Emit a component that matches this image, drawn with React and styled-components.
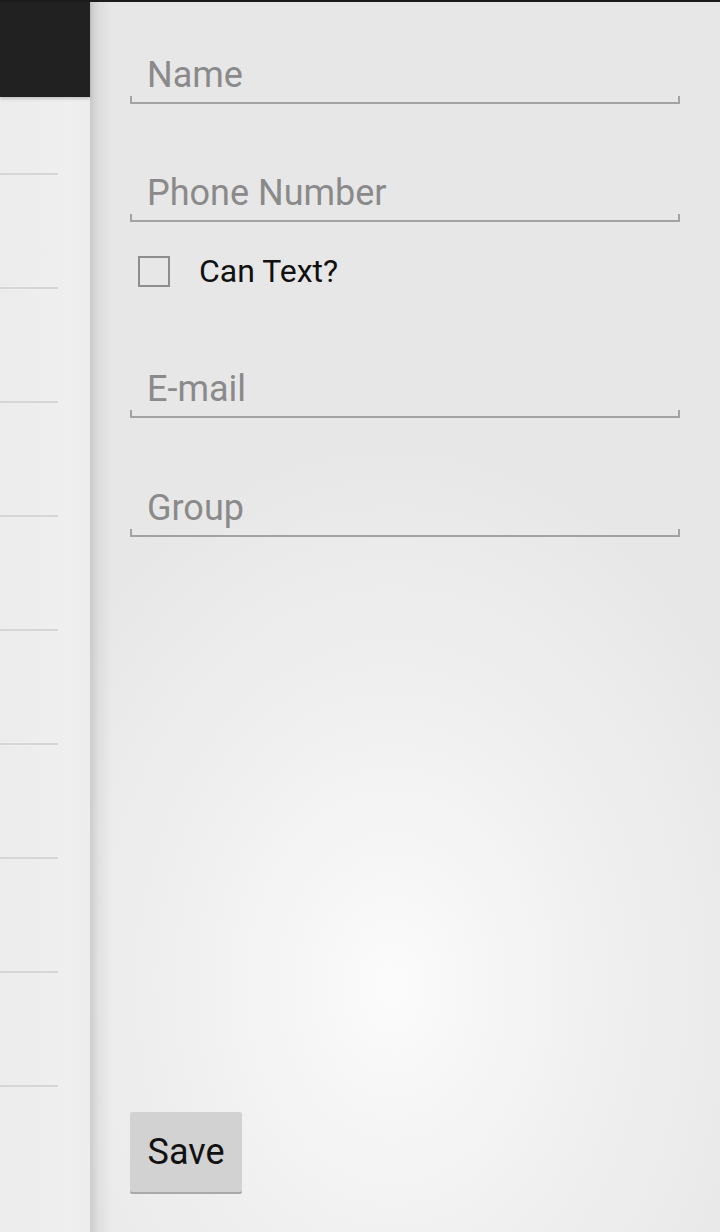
import styled, { createGlobalStyle } from "styled-components";

const GlobalStyle = createGlobalStyle`
  html, body { margin: 0; padding: 0; }
  body {
    font-family: Roboto, "Liberation Sans", sans-serif;
    background: #e7e7e7;
  }
`;

const Screen = styled.div`
  width: 720px;
  height: 1232px;
  display: flex;
  border-top: 2px solid #1b1b1b;
  box-sizing: border-box;
  overflow: hidden;
`;

const ListPane = styled.div`
  width: 90px;
  flex: none;
  background: linear-gradient(to right, #ececec 0%, #efefef 80%, #ededed 100%);
  display: flex;
  flex-direction: column;
`;

const ActionBar = styled.div`
  height: 95px;
  background: #212121;
  box-shadow: 0 2px 3px rgba(0, 0, 0, 0.18);
  position: relative;
`;

const ListRow = styled.div`
  height: ${(p) => p.$h}px;
  width: 58px;
  border-bottom: 2px solid #d6d6d6;
  box-sizing: border-box;
  flex: none;
`;

const FormPane = styled.div`
  flex: 1;
  display: flex;
  flex-direction: column;
  padding: 0 40px 40px 40px;
  background:
    linear-gradient(to right, rgba(0, 0, 0, 0.13) 0px, rgba(0, 0, 0, 0.05) 8px, rgba(0, 0, 0, 0) 22px),
    radial-gradient(ellipse 65% 45% at 48% 80%, #fbfbfb 0%, #f1f1f1 45%, #e7e7e7 100%);
`;

const Field = styled.div`
  position: relative;
  margin-top: ${(p) => p.$top}px;
  height: 56px;
  padding: 1px 0 0 17px;
  box-sizing: border-box;
  font-size: 36px;
  line-height: 53px;
  color: #8a8a8a;
  border-bottom: 2px solid #a3a3a3;
  &::before,
  &::after {
    content: "";
    position: absolute;
    bottom: 0;
    width: 2px;
    height: 6px;
    background: #a3a3a3;
  }
  &::before { left: 0; }
  &::after { right: 0; }
`;

const CheckRow = styled.label`
  display: flex;
  align-items: center;
  gap: 29px;
  margin-top: 33px;
  padding-left: 8px;
  height: 32px;
  font-size: 32px;
  color: #111;
`;

const Box = styled.span`
  width: 32px;
  height: 31px;
  box-sizing: border-box;
  border: 2px solid #8e8e8e;
  flex: none;
`;

const Spacer = styled.div`
  flex: 1;
`;

const SaveButton = styled.button`
  align-self: flex-start;
  width: 112px;
  height: 80px;
  border: none;
  border-radius: 2px;
  background: #d2d2d2;
  box-shadow: 0 2px 0 #a9a9a9;
  font-family: Roboto, "Liberation Sans", sans-serif;
  font-size: 36px;
  color: #111;
  padding: 0;
`;

const rows = [78, 114, 114, 114, 114, 114, 114, 114, 114];

export default function App() {
  return (
    <>
      <GlobalStyle />
      <Screen>
        <ListPane>
          <ActionBar />
          {rows.map((h, i) => (
            <ListRow key={i} $h={h} />
          ))}
        </ListPane>
        <FormPane>
          <Field $top={46}>Name</Field>
          <Field $top={62}>Phone Number</Field>
          <CheckRow>
            <Box />
            Can Text?
          </CheckRow>
          <Field $top={75}>E-mail</Field>
          <Field $top={63}>Group</Field>
          <Spacer />
          <SaveButton>Save</SaveButton>
        </FormPane>
      </Screen>
    </>
  );
}
